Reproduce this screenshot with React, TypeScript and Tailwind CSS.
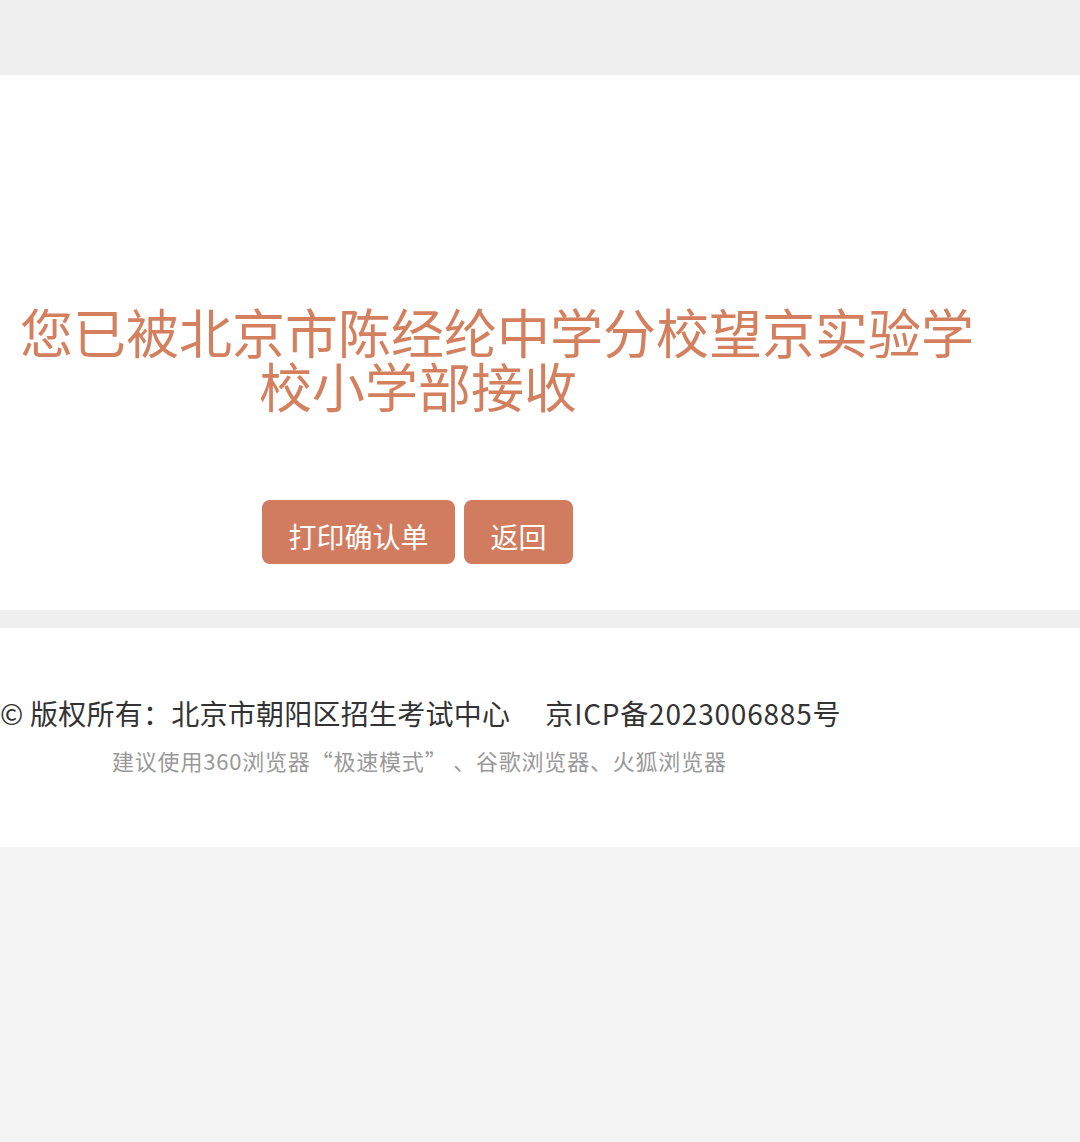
import React from "react";

export default function App() {
  const font = { fontFamily: '"Noto Sans CJK SC", "Noto Sans", sans-serif' };
  return (
    <div className="min-h-[1142px] bg-[#f4f4f4]" style={font}>
      <div className="h-[75px] bg-[#f0f0f0]" />
      <div className="h-[535px] bg-white pt-[229px]">
        <h1 className="text-[53px] leading-[54px] font-normal text-[#d4805f] whitespace-nowrap">
          <span className="block ml-[20px]">您已被北京市陈经纶中学分校望京实验学</span>
          <span className="block ml-[259px]">校小学部接收</span>
        </h1>
        <div className="mt-[88px] ml-[262px] flex gap-[9px]">
          <button className="h-[64px] w-[193px] rounded-[8px] bg-[#d27c5f] pt-[8px] text-white text-[28px] leading-none">
            打印确认单
          </button>
          <button className="h-[64px] w-[109px] rounded-[8px] bg-[#d27c5f] pt-[8px] text-white text-[28px] leading-none">
            返回
          </button>
        </div>
      </div>
      <div className="h-[18px] bg-[#f0f0f0]" />
      <div className="h-[219px] bg-white pt-[67px]">
        <div className="text-[28px] leading-[36px] text-[#333] whitespace-nowrap flex">
          <span className="tracking-[0.25px]">© 版权所有：北京市朝阳区招生考试中心</span>
          <span className="ml-[35px] tracking-[0.8px]">京ICP备2023006885号</span>
        </div>
        <div className="mt-[15px] ml-[112px] text-[22px] leading-[28px] text-[#999] whitespace-nowrap tracking-[0.8px]">
          建议使用360浏览器“极速模式”&nbsp;、谷歌浏览器、火狐浏览器
        </div>
      </div>
    </div>
  );
}
